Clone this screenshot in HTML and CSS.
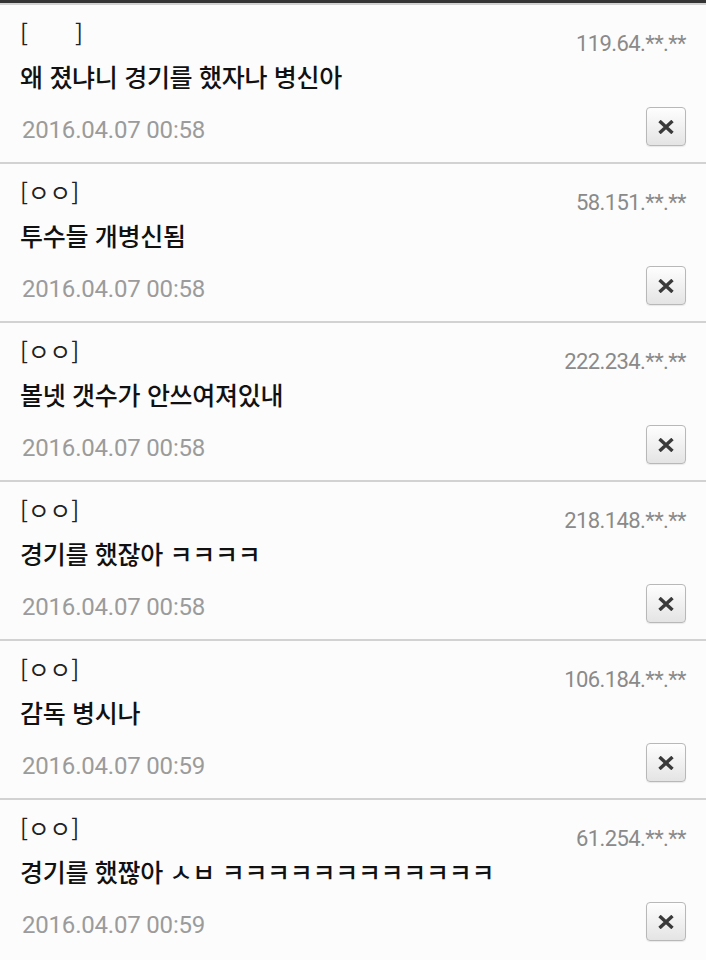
FILE: index.html
```html
<!DOCTYPE html>
<html lang="ko">
<head>
<meta charset="utf-8">
<title>댓글</title>
<link rel="stylesheet" href="styles.css">
</head>
<body>
<div class="topbar"></div>
<ul class="comments">
  <li class="comment">
    <div class="main">
      <div class="name">[<span class="blank"></span>]</div>
      <div class="text">왜 졌냐니 경기를 했자나 병신아</div>
      <div class="date">2016.04.07 00:58</div>
    </div>
    <div class="side">
      <div class="ip">119.64.**.**</div>
      <button class="del" aria-label="삭제"><svg viewBox="0 0 16 14" width="16" height="14"><path d="M1.5 1 L14.5 13 M14.5 1 L1.5 13" /></svg></button>
    </div>
  </li>
  <li class="comment">
    <div class="main">
      <div class="name">[ㅇㅇ]</div>
      <div class="text">투수들 개병신됨</div>
      <div class="date">2016.04.07 00:58</div>
    </div>
    <div class="side">
      <div class="ip">58.151.**.**</div>
      <button class="del" aria-label="삭제"><svg viewBox="0 0 16 14" width="16" height="14"><path d="M1.5 1 L14.5 13 M14.5 1 L1.5 13" /></svg></button>
    </div>
  </li>
  <li class="comment">
    <div class="main">
      <div class="name">[ㅇㅇ]</div>
      <div class="text">볼넷 갯수가 안쓰여져있내</div>
      <div class="date">2016.04.07 00:58</div>
    </div>
    <div class="side">
      <div class="ip">222.234.**.**</div>
      <button class="del" aria-label="삭제"><svg viewBox="0 0 16 14" width="16" height="14"><path d="M1.5 1 L14.5 13 M14.5 1 L1.5 13" /></svg></button>
    </div>
  </li>
  <li class="comment">
    <div class="main">
      <div class="name">[ㅇㅇ]</div>
      <div class="text">경기를 했잖아 ㅋㅋㅋㅋ</div>
      <div class="date">2016.04.07 00:58</div>
    </div>
    <div class="side">
      <div class="ip">218.148.**.**</div>
      <button class="del" aria-label="삭제"><svg viewBox="0 0 16 14" width="16" height="14"><path d="M1.5 1 L14.5 13 M14.5 1 L1.5 13" /></svg></button>
    </div>
  </li>
  <li class="comment">
    <div class="main">
      <div class="name">[ㅇㅇ]</div>
      <div class="text">감독 병시나</div>
      <div class="date">2016.04.07 00:59</div>
    </div>
    <div class="side">
      <div class="ip">106.184.**.**</div>
      <button class="del" aria-label="삭제"><svg viewBox="0 0 16 14" width="16" height="14"><path d="M1.5 1 L14.5 13 M14.5 1 L1.5 13" /></svg></button>
    </div>
  </li>
  <li class="comment">
    <div class="main">
      <div class="name">[ㅇㅇ]</div>
      <div class="text">경기를 했짢아 ㅅㅂ ㅋㅋㅋㅋㅋㅋㅋㅋㅋㅋㅋㅋ</div>
      <div class="date">2016.04.07 00:59</div>
    </div>
    <div class="side">
      <div class="ip">61.254.**.**</div>
      <button class="del" aria-label="삭제"><svg viewBox="0 0 16 14" width="16" height="14"><path d="M1.5 1 L14.5 13 M14.5 1 L1.5 13" /></svg></button>
    </div>
  </li>
</ul>
</body>
</html>
```

FILE: styles.css
```css
html, body {
  margin: 0;
  padding: 0;
  background: #fcfcfc;
}

body {
  font-family: "Noto Sans CJK KR", "Noto Sans", sans-serif;
  width: 706px;
  height: 960px;
  overflow: hidden;
}

.topbar {
  height: 3px;
  background: #343434;
}

.comments {
  list-style: none;
  margin: 0;
  padding: 0;
}

.comment {
  display: flex;
  justify-content: space-between;
  height: 157px;
  border-top: 2px solid #d2d2d2;
  padding: 0 20px 0 20px;
  box-sizing: content-box;
}

.main {
  display: flex;
  flex-direction: column;
}

.name {
  margin-top: 13px;
  font-size: 23.5px;
  line-height: 30px;
  color: #222;
}

.blank {
  display: inline-block;
  width: 47px;
}

.text {
  margin-top: 13px;
  font-size: 25px;
  font-weight: 500;
  line-height: 30px;
  color: #111;
  letter-spacing: -0.3px;
  white-space: nowrap;
}

.date {
  margin-top: 24px;
  font-family: Roboto, "Noto Sans", sans-serif;
  font-size: 24px;
  line-height: 30px;
  color: #9b9b9b;
  padding-left: 2px;
  letter-spacing: -0.2px;
}

.side {
  display: flex;
  flex-direction: column;
  align-items: flex-end;
}

.ip {
  margin-top: 24px;
  font-family: Roboto, "Noto Sans", sans-serif;
  font-size: 22px;
  line-height: 30px;
  color: #8a8a8a;
  letter-spacing: -0.6px;
}

.del {
  margin-top: 48px;
  width: 40px;
  height: 39px;
  padding: 0;
  border: 1px solid #b8b8b8;
  border-radius: 4px;
  background: linear-gradient(#fefefe, #e4e4e4);
  box-shadow: 0 1px 1px rgba(0, 0, 0, 0.08);
  display: flex;
  align-items: center;
  justify-content: center;
}

.del svg {
  display: block;
  fill: none;
  stroke: #3a3a3a;
  stroke-width: 3.4;
  stroke-linecap: butt;
}
```
